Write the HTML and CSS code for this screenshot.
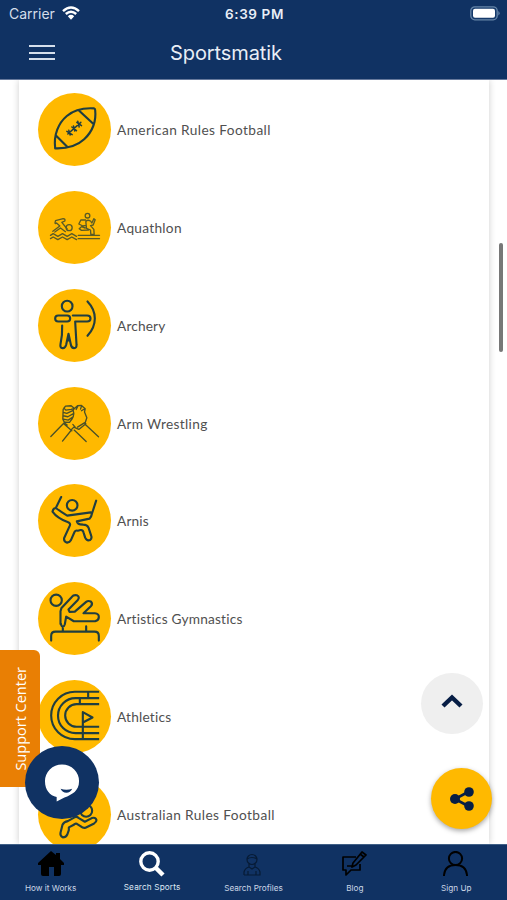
FILE: index.html
```html
<!DOCTYPE html>
<html lang="en">
<head>
<meta charset="utf-8">
<title>Sportsmatik</title>
<link rel="stylesheet" href="styles.css">
</head>
<body>
<div class="app">
  <header class="header">
    <div class="status">
      <div class="carrier"><span>Carrier</span>
        <svg class="wifi" viewBox="0 0 18 14"><path d="M1 5.2Q9-2.2 17 5.2M3.8 8Q9 3.3 14.2 8" fill="none" stroke="#fff" stroke-width="2.4"/><path d="M5.8 10.3Q9 7.4 12.2 10.3L9 13.7Z" fill="#fff"/></svg>
      </div>
      <div class="time">6:39 PM</div>
      <svg class="battery" viewBox="0 0 30 15"><rect x=".8" y=".8" width="26.4" height="13" rx="4" fill="#15396a" stroke="#6685a8" stroke-width="1.3"/><rect x="3" y="2.8" width="22" height="9" rx="2" fill="#fff"/><path d="M28.3 5Q31 7 28.3 9.5Z" fill="#6685a8"/></svg>
    </div>
    <div class="titlebar">
      <div class="menu"><i></i><i></i><i></i></div>
      <h1>Sportsmatik</h1>
    </div>
  </header>
  <main class="content">
    <ul class="card">
      <li><svg class="sport" viewBox="22.5 26 219 219"><path d="M74 192C69 151 84 116 109 95Q139 69 190 72Q194 73 194 77C198 114 183 144 161 165Q130 194 74 192ZM146 79L189 119M77 154L111 188"/><path class="lace" d="M112 149L151 114M109 141L125 151M119 152L115 138M124 128L138 139M133 140L129 125M139 114L153 124M146 128L142 111"/></svg><span class="t1">American Rules Football</span></li>
      <li><svg class="sport fine" viewBox="22.5 28 219 219"><path d="M60 161L68 156 82 164 96 156 110 164 124 156 138 164M60 171L68 166 82 174 96 166 110 174 124 166 138 174M67 149L88 133 78 124Q71 129 75 117L98 111Q105 111 103 118L94 122 110 142M73 151L90 139 105 150M143 161H207M143 171H207M181 158L180 145 168 140 166 120Q170 113 180 118L184 124 190 111 194 114 188 130 180 132 190 143 191 158ZM165 115H151L145 127 157 133 166 131M164 139L153 135 146 141 153 146 174 145"/><circle cx="116" cy="138" r="9"/><circle cx="171" cy="102" r="7"/></svg><span class="t2">Aquathlon</span></li>
      <li><svg class="sport" viewBox="22.5 27.6 219 219"><circle cx="110" cy="79" r="16"/><rect x="74" y="107" width="45" height="18" rx="9"/><path d="M127 107H170Q180 107 180 116T170 125H134L138 194Q139 205 131 205T121 194L114 162 107 195Q104 206 96 205T90 193Q96 168 95 137M171 65Q193 88 193 116T171 168M114 162V182"/></svg><span class="t3">Archery</span></li>
      <li><svg class="sport thin" viewBox="22.5 26.7 219 219"><path d="M61 175L99 136M96 189L121 158M131 156L167 190M163 138L204 176M99 136L124 158M123 154L130 147 145 154 166 137M141 147L164 133M103 135L97 123 98 94 105 84 122 83 132 91 141 83 153 82 164 92 162 102 169 119 164 134M105 84L100 90 106 96 122 94 132 91M98 103L109 106 128 97 131 92M98 113L112 116 130 106 128 97M99 123L113 126 128 116 130 106M103 132L117 133 125 122 128 116M142 84L137 94M153 84L150 93M163 92L153 98M127 139L134 147M104 136L110 141"/></svg><span class="t4">Arm Wrestling</span></li>
      <li><svg class="sport" viewBox="22.5 29 219 219"><circle cx="125" cy="93" r="16"/><path d="M92 68L76 101Q68 101 66 112Q80 132 113 144Q121 147 118 154L101 191Q99 202 110 205 118 204 121 198L132 173Q135 167 142 169L150 167Q157 166 159 174L164 190Q169 201 179 197 185 192 182 184L174 160Q170 151 158 151L149 150Q141 149 139 141L177 133Q183 127 184 119L197 79M76 101Q92 113 110 124L181 114"/></svg><span class="t5">Arnis</span></li>
      <li><svg class="sport" viewBox="22.5 28.3 219 219"><circle cx="77" cy="83" r="17"/><path d="M90 154V116L93 106 124 73Q129 66 139 68 149 73 142 82L114 111 117 118 133 117 167 88Q173 83 181 87 188 94 181 101L159 122H193Q205 123 205 133T194 146H130L107 132 103 155Q101 162 97 162T91 153M97 163V177M167 161V177M62 204V190Q62 177 75 177H192Q205 177 205 190V204"/></svg><span class="t6">Artistics Gymnastics</span></li>
      <li><svg class="sport flat" viewBox="112.5 120.6 219 219"><path d="M296 156H223A71 71 0 0 0 223 298H296M296 175H225A52.500 52.500 0 0 0 225 280H296M296 193H228A34 34 0 0 0 228 261H296M263 156V175M238 175V193M247 298V217L276 233 247 248"/></svg><span class="t7">Athletics</span></li>
      <li><svg class="sport" viewBox="112.5 413.7 219 219"><circle cx="257" cy="512" r="18"/><path d="M205 570L200 584Q196 592 187 592 178 587 180 578L186 554Q190 545 202 543L218 534Q227 527 235 534L253 545 274 534Q285 530 288 540 288 546 281 550L255 563Q248 565 241 559L229 551Q224 549 220 554L205 562V570Z"/></svg><span class="t8">Australian Rules Football</span></li>
    </ul>
  </main>
  <nav class="tabs">
    <a><svg viewBox="0 0 26 26"><path d="M13 0L18 4V2H22V8L26 12V14H23V23Q23 25 21 25H16V16H11V25H5Q3 25 3 23V14H0V12Z" fill="#000"/></svg><span class="n1">How it Works</span></a>
    <a class="active"><svg viewBox="0 0 26 26" fill="none" stroke="#fff"><circle cx="10.5" cy="10.5" r="8.7" stroke-width="3.4"/><path d="M17 17L24 24" stroke-width="4.5"/></svg><span class="n2">Search Sports</span></a>
    <a><svg viewBox="0 0 26 26" fill="none" stroke="#071b35" stroke-width="1.2"><circle cx="12" cy="8.500" r="5"/><path d="M7 8Q12 5 17 8M9 13V16L12 18 15 16V13M4 24V21Q5 17 9 16M15 16Q19 17 20 21V24H4M8 20V24M16 20V24"/></svg><span class="n3">Search Profiles</span></a>
    <a><svg viewBox="0 0 26 26" fill="none" stroke="#000" stroke-width="1.7" stroke-linejoin="round"><path d="M14 6H1V19H4V24L9 19H18V13M10 16L11 12 20 1 24 4 14 14ZM18 3L22 6M5 15H11"/></svg><span class="n4">Blog</span></a>
    <a><svg viewBox="0 0 26 26" fill="none" stroke="#000" stroke-width="2"><circle cx="12.500" cy="7.500" r="6.600"/><path d="M1 25V24Q2 14 12.500 14T24 24V25"/></svg><span class="n5">Sign Up</span></a>
  </nav>
  <div class="support"><span>Support Center</span></div>
  <div class="chat"><svg viewBox="0 0 36 38"><path d="M17.5 0A17.5 17 0 0 1 35 17.5C35 27 28 31 20 34L12 38V33.5C5 32 0 26 0 17.5A17.5 17 0 0 1 17.5 0Z" fill="#fff"/><path d="M16 25Q22 27 28 25Q26 29 22 29T16 25Z" fill="#103263"/></svg></div>
  <div class="up"><svg viewBox="0 0 22 14"><path d="M2 12L11 3.5 20 12" fill="none" stroke="#071e45" stroke-width="4.4"/></svg></div>
  <div class="share"><svg viewBox="0 0 24 24" fill="#071e45"><path d="M19 4.5L5 12 19 19.5" fill="none" stroke="#071e45" stroke-width="2.6"/><circle cx="5" cy="12" r="5"/><circle cx="19" cy="5" r="4.8"/><circle cx="19" cy="19" r="4.8"/></svg></div>
  <div class="scroll"></div>
</div>
</body>
</html>
```
FILE: styles.css
```css
* { box-sizing: border-box; }
body { margin: 0; background: #fff; }
.app { position: relative; display: flex; flex-direction: column; width: 507px; height: 900px; overflow: hidden; font-family: Lato, sans-serif; }
.header { flex: 0 0 80px; background: #103263; color: #e9eef6; font-family: Inter, sans-serif; border-bottom: 1px solid #66799c; }
.status { display: grid; grid-template-columns: 1fr auto 1fr; align-items: center; height: 27px; padding: 0 7px 0 9px; }
.carrier { display: flex; align-items: center; gap: 6px; font-size: 14px; color: #d5deea; }
.carrier span { width: 47px; white-space: nowrap; }
.wifi { width: 18px; height: 14px; margin-top: -2px; }
.time { font-size: 13.5px; font-weight: 600; letter-spacing: .6px; }
.battery { width: 30px; height: 15px; justify-self: end; }
.titlebar { display: grid; grid-template-columns: 170px 1fr; align-items: center; height: 51px; }
.menu { display: flex; flex-direction: column; gap: 4.5px; width: 26px; margin-left: 29px; }
.menu i { height: 2px; background: #d5dfec; }
h1 { margin: 0; font-size: 20px; font-weight: 400; letter-spacing: -.1px; }
.content { flex: 1; min-height: 0; overflow: hidden; padding: 0 18px 0 19px; background: #fff; }
.card { margin: 0; padding: 1.1px 0 0 18.5px; height: 764px; list-style: none; background: #fff; box-shadow: 0 0 7px rgba(0,0,0,.2); }
.card li { display: flex; align-items: center; height: 97.75px; gap: 6.5px; color: #505050; font-size: 13.7px; white-space: nowrap; font-variant-ligatures: none; }
.t1, .t8 { letter-spacing: .4px; }
.t2 { letter-spacing: .28px; }
.t3, .t5 { letter-spacing: .15px; }
.t4 { letter-spacing: .32px; }
.t6, .t7 { letter-spacing: .2px; }
.sport { width: 73px; height: 73px; border-radius: 50%; background: #ffb900; fill: none; stroke: #203e40; stroke-width: 6.4; stroke-linecap: round; stroke-linejoin: round; }
.sport .lace { stroke-width: 4.5; }
.sport.flat { stroke-linecap: butt; }
.sport.fine { stroke-width: 4; stroke: #5a5b26; }
.sport.thin { stroke-width: 4; stroke: #4a5128; }
.tabs { flex: 0 0 56px; display: grid; grid-template-columns: repeat(5, 1fr); background: #103263; border-top: 1px solid #406087; }
.tabs a { display: flex; flex-direction: column; align-items: center; padding-top: 6px; gap: 5px; color: #cbd6e6; font: 8.2px/12px Inter, sans-serif; white-space: nowrap; }
.tabs svg { width: 26px; height: 26px; }
.tabs .active { gap: 4px; color: #dfe8f4; }
.n2 { letter-spacing: .15px; }
.support { position: absolute; left: 0; top: 650px; width: 40px; height: 137px; display: flex; align-items: center; justify-content: center; background: #e97f04; border-radius: 0 6px 0 0; color: #fff; font-family: "Open Sans", sans-serif; font-size: 14.5px; }
.support span { writing-mode: vertical-rl; transform: rotate(180deg); white-space: nowrap; }
.chat, .up, .share { position: absolute; display: flex; align-items: center; justify-content: center; border-radius: 50%; }
.chat { left: 25px; top: 746px; width: 74px; height: 73px; background: #103263; }
.chat svg { width: 35px; height: 38px; }
.up { left: 421px; top: 673px; width: 62px; height: 61px; background: #efefef; padding-bottom: 6px; padding-right: 1px; }
.up svg { width: 22px; height: 14px; }
.share { left: 431px; top: 768px; width: 61px; height: 61px; background: #ffb900; box-shadow: 0 2px 5px rgba(0,0,0,.35); }
.share svg { width: 24px; height: 24px; }
.scroll { position: absolute; left: 499px; top: 243px; width: 4px; height: 109px; border-radius: 2px; background: #777; }
```
